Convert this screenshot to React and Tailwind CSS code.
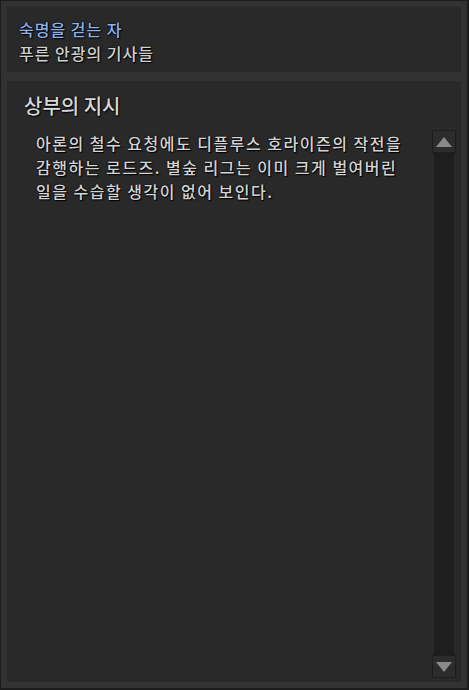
export default function App() {
  const shadow = '[text-shadow:0_0_2px_#000,1px_1px_1px_#000]';

  return (
    <div
      className="w-[469px] h-[690px] bg-[#1b1b1b] p-[1px] pb-[2px] pr-[2px]"
      style={{ fontFamily: '"Noto Sans CJK KR", "Noto Sans", sans-serif' }}
    >
      <div className="h-full bg-[#323232] px-[6px] py-[6px] flex flex-col gap-[9px]">
        {/* Header card */}
        <div className={`h-[65px] bg-[#292929] pl-[12px] pt-[10px] font-medium ${shadow}`}>
          <div className="text-[16px] leading-[24px] tracking-[1px] text-[#8bb4ef]">숙명을 걷는 자</div>
          <div className="text-[16px] leading-[24px] tracking-[1px] text-[#cfcfcf]">푸른 안광의 기사들</div>
        </div>

        {/* Orders card */}
        <div className="flex-1 bg-[#292929] flex flex-col pl-[17px] pr-[5px] pt-[11px] pb-[4px]">
          <div className={`text-[20px] leading-[28px] font-medium text-[#d8d8d8] ${shadow}`}>상부의 지시</div>
          <div className="flex-1 flex mt-[10px]">
            <p
              className={`flex-1 pl-[12px] pt-[1px] text-[16px] leading-[24px] tracking-[1.5px] font-medium break-keep text-[#d4d4d4] ${shadow}`}
            >
              아론의 철수 요청에도 디플루스 호라이즌의 작전을 감행하는 로드즈. 별숲 리그는 이미 크게 벌여버린 일을 수습할 생각이 없어 보인다.
            </p>
            <div className="w-[24px] flex flex-col items-center">
              <div className="w-[24px] h-[23px] bg-[#2c2c2c] border border-[#1d1d1d] flex items-center justify-center">
                <svg width="16" height="10" viewBox="0 0 16 10">
                  <polygon points="8,0 16,10 0,10" fill="#8a8a8a" />
                </svg>
              </div>
              <div className="w-[20px] flex-1 bg-[#1e1e1e]" />
              <div className="w-[24px] h-[23px] bg-[#2c2c2c] border border-[#1d1d1d] flex items-center justify-center">
                <svg width="16" height="10" viewBox="0 0 16 10">
                  <polygon points="0,0 16,0 8,10" fill="#8a8a8a" />
                </svg>
              </div>
            </div>
          </div>
        </div>
      </div>
    </div>
  );
}
